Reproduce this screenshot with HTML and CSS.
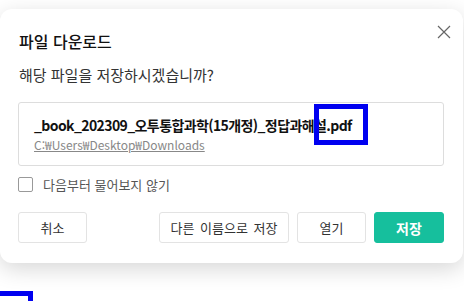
FILE: index.html
```html
<!DOCTYPE html>
<html lang="ko">
<head>
<meta charset="UTF-8">
<title>파일 다운로드</title>
<link rel="stylesheet" href="styles.css">
</head>
<body>
<div class="dlg">
	<span class="close">
		<svg width="14" height="14" viewBox="0 0 14 14"><path d="M1 1L13 13M13 1L1 13" stroke="#666" stroke-width="1.2" fill="none"/></svg>
	</span>
	<div class="dlg_title">파일 다운로드</div>
	<div class="dlg_msg">해당 파일을 저장하시겠습니까?</div>
	<div class="file_box">
		<div class="file_name">_book_202309_오투통합과학(15개정)_정답과해설.pdf</div>
		<div class="file_path">C:₩Users₩Desktop₩Downloads</div>
		<span class="mark mark_ext"></span>
	</div>
	<label class="chk_row"><span class="chk"></span>다음부터 물어보지 않기</label>
	<div class="btns">
		<button class="btn btn_cancel">취소</button>
		<div class="btn_group">
			<button class="btn btn_as">다른 이름으로 저장</button>
			<button class="btn btn_open">열기</button>
			<button class="btn btn_save">저장</button>
		</div>
	</div>
</div>
<span class="mark mark_corner"></span>
</body>
</html>
```
FILE: styles.css
```css
*{margin:0;padding:0;box-sizing:border-box;}
html,body{height:100%;}
body{background:#fff;font-family:"Noto Sans CJK KR","Noto Sans",sans-serif;color:#222;overflow:hidden;position:relative;}
.dlg{position:relative;width:463px;margin-top:9px;background:#fff;border-radius:12px;padding:20px 19px 20px 18px;box-shadow:0 6px 22px rgba(0,0,0,.16);}
.close{position:absolute;right:12px;top:16px;width:14px;height:14px;display:block;}
.close svg{display:block;}
.dlg_title{font-size:16px;line-height:24px;font-weight:500;color:#111;padding-left:1px;}
.dlg_msg{font-size:15px;line-height:20px;color:#333;margin-top:12px;padding-left:1px;}
.file_box{position:relative;margin-top:17px;border:1px solid #ddd;border-radius:3px;padding:11px 15px 11px 15px;}
.file_name{font-size:14px;line-height:22px;font-weight:bold;color:#111;white-space:nowrap;letter-spacing:-0.6px;}
.file_path{font-size:12px;line-height:18px;color:#888;text-decoration:underline;}
.chk_row{display:flex;align-items:center;gap:10px;margin-top:11px;font-size:13px;color:#555;line-height:15px;}
.chk{width:15px;height:15px;border:1px solid #999;border-radius:2px;background:#fff;}
.btns{display:flex;justify-content:space-between;margin-top:20px;}
.btn_group{display:flex;gap:8px;}
.btn{height:31px;border:1px solid #e3e3e3;border-radius:3px;background:#fff;font-family:inherit;font-size:13px;color:#333;word-spacing:2px;}
.btn_cancel,.btn_open{width:69px;}
.btn_as{width:130px;}
.btn_save{width:70px;background:#16bf9d;border-color:#16bf9d;color:#fff;font-weight:bold;font-size:14px;}
.mark{position:absolute;border:5px solid #0000f0;}
.mark_ext{left:295px;top:1px;width:54px;height:41px;}
.mark_corner{left:-5px;top:291px;width:38px;height:10px;border-bottom:0;}
```
